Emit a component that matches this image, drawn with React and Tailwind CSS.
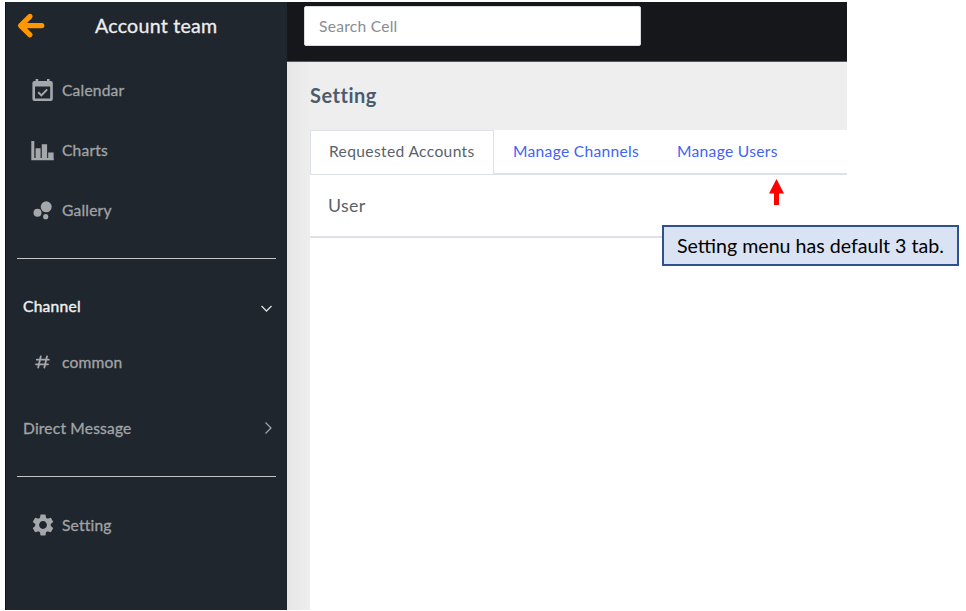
import { MdSettings } from "react-icons/md";

function BackArrow() {
  return (
    <svg className="h-7 w-8" viewBox="0 0 32 28" fill="none" stroke="#ff9800" strokeWidth="5.2" strokeLinecap="round" strokeLinejoin="round">
      <path d="M14 4.4 4.6 13.6l9.4 9.2M7 13.6h18.8" />
    </svg>
  );
}

function CalendarIcon() {
  return (
    <svg className="h-6 w-6" viewBox="0 0 24 24">
      <path fill="#a4a8ab" fillRule="evenodd" d="M5.6 1h2.6v2h8.8V1h2.6v2h1.2a2 2 0 0 1 2 2v16a2 2 0 0 1-2 2H4.400a2 2 0 0 1-2-2V5a2 2 0 0 1 2-2h1.200zM5 8.400V20.600h15.200V8.400z" />
      <path fill="none" stroke="#a4a8ab" strokeWidth="2" d="m8.200 14.200 3.200 3.200 5.800-6" />
    </svg>
  );
}

function BubbleIcon() {
  return (
    <svg className="h-6 w-6" viewBox="0 0 24 24" fill="#a4a8ab">
      <circle cx="7.500" cy="14.700" r="4" />
      <circle cx="16.200" cy="8.800" r="5.500" />
      <circle cx="15.700" cy="18.700" r="2.600" />
    </svg>
  );
}

function ChartIcon() {
  return (
    <svg className="h-6 w-6" viewBox="0 0 24 24" fill="#a4a8ab">
      <path d="M1.300 3h3v17.100h19.500v2.200H1.300zM5.600 10.200h5V20h-5zM11.800 6.200h5.300V20h-5.300zM18.200 14.600h5.400V20h-5.400z" />
    </svg>
  );
}

function HashIcon() {
  return (
    <svg className="h-6 w-6" viewBox="0 0 24 24" fill="none" stroke="#a4a8ab" strokeWidth="1.800" strokeLinecap="round">
      <path d="M10.800 6.300 8.200 17.500M17 6.300l-2.600 11.200M6.800 9.700h12M6 14.300h12" />
    </svg>
  );
}

function NavItem({ icon, children }) {
  return (
    <div className="flex h-6 items-center gap-[8px] pl-6">
      {icon}
      <span className="text-[15.6px] leading-6 tracking-[0.18px] text-[#a0a4a6] [-webkit-text-stroke:0.3px]">{children}</span>
    </div>
  );
}

function Sidebar() {
  return (
    <aside className="flex w-[282px] shrink-0 flex-col border-l border-[#0b1118] bg-[#20262e]">
      <div className="flex h-12 items-center pl-2.5">
        <BackArrow />
        <h1 className="ml-[47px] text-[19.6px] leading-6 tracking-[0.25px] text-[#eeeeee] [-webkit-text-stroke:0.3px]">Account team</h1>
      </div>
      <nav className="mt-7 flex flex-col gap-9">
        <NavItem icon={<CalendarIcon />}>Calendar</NavItem>
        <NavItem icon={<ChartIcon />}>Charts</NavItem>
        <NavItem icon={<BubbleIcon />}>Gallery</NavItem>
      </nav>
      <hr className="mr-[11px] ml-[11px] mt-9 border-[#c4c6c4]" />
      <div className="mt-[35px] flex h-6 items-center justify-between pr-[13px] pl-[17px]">
        <span className="text-[15.6px] leading-6 tracking-[0.25px] text-[#f0f0f0] [-webkit-text-stroke:0.4px]">Channel</span>
        <svg className="mt-1 h-3.5 w-3.5" viewBox="0 0 14 14" fill="none" stroke="#dedede" strokeWidth="1.3"><path d="m1.500 5 5 5 5-5" /></svg>
      </div>
      <div className="mt-8">
        <NavItem icon={<HashIcon />}>common</NavItem>
      </div>
      <div className="mt-[42px] flex h-6 items-center justify-between pr-3 pl-[17px]">
        <span className="text-[15.6px] leading-6 tracking-[0.18px] text-[#a0a4a6] [-webkit-text-stroke:0.3px]">Direct Message</span>
        <svg className="h-3.5 w-3.5" viewBox="0 0 14 14" fill="none" stroke="#a4a8ab" strokeWidth="1.2"><path d="m4.5 1.5 5.5 5.5-5.5 5.5" /></svg>
      </div>
      <hr className="mr-[11px] ml-[11px] mt-9 border-[#c4c6c4]" />
      <div className="mt-9">
        <NavItem icon={<MdSettings className="-mr-[2px] size-[26px] text-[#a4a8ab]" />}>Setting</NavItem>
      </div>
    </aside>
  );
}

function Tabs() {
  return (
    <div className="flex h-[45px] text-[15.6px] leading-6">
      <div className="w-[184px] border border-[#dee2e6] pt-2 pl-[18px] whitespace-nowrap text-[#5a626a]">
        <span className="tracking-[0.35px]">Requested Accounts</span>
      </div>
      <div className="flex h-[45px] flex-1 border-b-2 border-[#dee2e6] pt-[9px] whitespace-nowrap text-[#4263f5]">
        <span className="ml-[19px] w-[164px] tracking-[0.3px]">Manage Channels</span>
        <span className="tracking-[0.3px]">Manage Users</span>
      </div>
    </div>
  );
}

export default function App() {
  return (
    <div className="relative h-[611px] w-[966px] overflow-hidden bg-white pt-0.5 pl-[5px] font-['Lato','Open_Sans',sans-serif]">
      <div className="flex h-[608px] w-[842px]">
        <Sidebar />
        <main className="flex min-w-0 flex-1 flex-col">
          <header className="h-[60px] shrink-0 border-b border-[#56575b] bg-[#15171b] pt-1 pl-[17px]">
            <div className="h-10 w-[337px] rounded-[2px] border border-[#d9dbdd] bg-white pt-[7px] pl-[14px] text-[15.6px] leading-6 text-[#868d94]">
              <span className="tracking-[0.25px]">Search Cell</span>
            </div>
          </header>
          <div className="flex flex-1 flex-col bg-linear-to-r from-[#e6e6e6] to-[#eeeeee] to-[24px]">
            <h2 className="h-[68px] pt-[21px] pl-[23px] text-[20px] leading-6 font-bold tracking-[0.5px] text-[#495b6d]">Setting</h2>
            <section className="ml-[23px] flex-1 bg-white">
              <Tabs />
              <div className="h-[63px] border-b-2 border-[#dee2e6] pt-[18px] pl-[18px] text-[17.8px] leading-6 text-[#5a626a]">
                <span className="tracking-[0.3px]">User</span>
              </div>
            </section>
          </div>
        </main>
      </div>
      <svg className="absolute top-[178px] left-[768px] h-7 w-4" viewBox="0 0 16 28" fill="#ff0000"><path d="M8.5 1 16 15.6h-5V27H6V15.6H1z" /></svg>
      <div className="absolute top-[225px] left-[662px] flex h-[41px] w-[297px] items-center border-2 border-[#2f528f] bg-[#dae3f3] pt-px pl-[13px] text-[19.6px] whitespace-nowrap text-black">
        <span>Setting menu has default 3 tab.</span>
      </div>
    </div>
  );
}
